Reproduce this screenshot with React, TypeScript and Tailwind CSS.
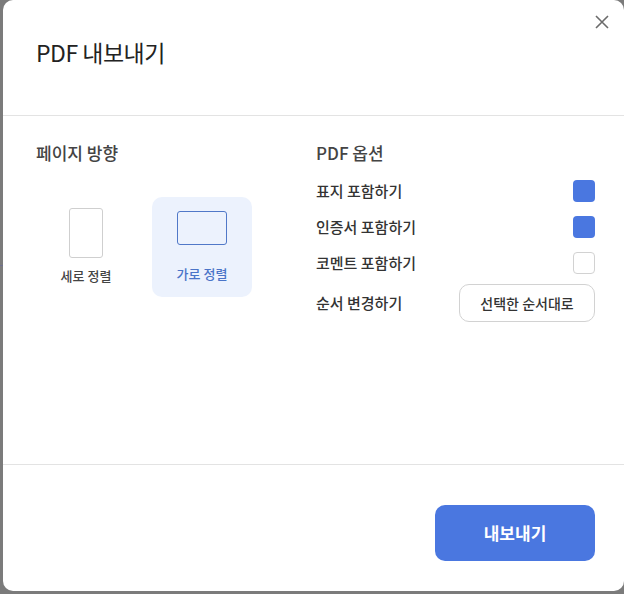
import { useState } from "react"

const font = { fontFamily: '"Noto Sans CJK KR", "Noto Sans", sans-serif' }

const Check = ({ checked, onClick }: { checked: boolean; onClick: () => void }) => (
  <button
    onClick={onClick}
    className={
      checked
        ? "w-[22px] h-[22px] rounded-[4px] bg-[#4a77e0]"
        : "w-[22px] h-[22px] rounded-[4px] border border-[#d2d2d2] bg-white"
    }
  />
)

const App = () => {
  const [landscape, setLandscape] = useState(true)
  const [opts, setOpts] = useState({ cover: true, cert: true, comment: false })

  return (
    <div className="flex min-h-[594px] bg-[#7b7b7b]" style={font}>
      {/* sliver of the page behind the modal */}
      <div className="w-[3px] pt-[265px]">
        <div className="h-px bg-[#6f6f90]" />
      </div>

      <div className="w-[621px] h-[591px] bg-white rounded-[10px] flex flex-col">
        <div className="relative h-[116px] border-b border-[#e3e3e3] pl-[33px] pt-[36px]">
          <h2 className="text-[23px] leading-[32px] text-[#222] tracking-[-0.5px]">PDF 내보내기</h2>
          <button className="absolute top-[15px] right-[15px] text-[#6b6b6b]">
            <svg width="14" height="14" viewBox="0 0 14 14" fill="none" stroke="currentColor" strokeWidth="1.6">
              <path d="M1 1l12 12M13 1L1 13" />
            </svg>
          </button>
        </div>

        <div className="flex-1 flex pl-[33px] pr-[29px] pt-[25px]">
          <div className="w-[280px]">
            <h3 className="text-[17px] leading-[24px] font-medium text-[#444]">페이지 방향</h3>
            <div className="flex gap-4 mt-[32px]">
              <button
                onClick={() => setLandscape(false)}
                className={
                  "w-[100px] h-[100px] rounded-[10px] flex flex-col items-center pt-[11px] " +
                  (!landscape ? "bg-[#ecf2fd]" : "")
                }
              >
                <div
                  className={
                    "w-[34px] h-[50px] rounded-[3px] " +
                    (!landscape ? "border-[1.5px] border-[#5078c8]" : "border border-[#cfcfcf]")
                  }
                />
                <span
                  className={
                    "mt-[9px] text-[13px] leading-[18px] font-medium " +
                    (!landscape ? "text-[#4a74c8]" : "text-[#444]")
                  }
                >
                  세로 정렬
                </span>
              </button>
              <button
                onClick={() => setLandscape(true)}
                className={
                  "w-[100px] h-[100px] rounded-[10px] flex flex-col items-center pt-[14px] " +
                  (landscape ? "bg-[#ecf2fd]" : "")
                }
              >
                <div
                  className={
                    "w-[50px] h-[34px] rounded-[3px] " +
                    (landscape ? "border-[1.5px] border-[#5078c8]" : "border border-[#cfcfcf]")
                  }
                />
                <span
                  className={
                    "mt-[20px] text-[13px] leading-[18px] font-medium " +
                    (landscape ? "text-[#4a74c8]" : "text-[#444]")
                  }
                >
                  가로 정렬
                </span>
              </button>
            </div>
          </div>

          <div className="flex-1">
            <h3 className="text-[17px] leading-[24px] font-medium text-[#444]">PDF 옵션</h3>
            <div className="mt-[8px] text-[15px] font-medium text-[#333]">
              <div className="h-[36px] flex items-center justify-between">
                <span>표지 포함하기</span>
                <Check checked={opts.cover} onClick={() => setOpts({ ...opts, cover: !opts.cover })} />
              </div>
              <div className="h-[36px] flex items-center justify-between">
                <span>인증서 포함하기</span>
                <Check checked={opts.cert} onClick={() => setOpts({ ...opts, cert: !opts.cert })} />
              </div>
              <div className="h-[36px] flex items-center justify-between">
                <span>코멘트 포함하기</span>
                <Check checked={opts.comment} onClick={() => setOpts({ ...opts, comment: !opts.comment })} />
              </div>
              <div className="mt-[3px] flex items-center justify-between">
                <span>순서 변경하기</span>
                <button className="w-[136px] h-[38px] rounded-[10px] border border-[#d2d2d2] text-[14px] text-[#333]">
                  선택한 순서대로
                </button>
              </div>
            </div>
          </div>
        </div>

        <div className="h-[127px] border-t border-[#e3e3e3] flex justify-end pr-[29px] pt-[40px]">
          <button className="w-[160px] h-[56px] rounded-[10px] bg-[#4a77e0] text-white text-[17px] font-bold">
            내보내기
          </button>
        </div>
      </div>
    </div>
  )
}

export default App
